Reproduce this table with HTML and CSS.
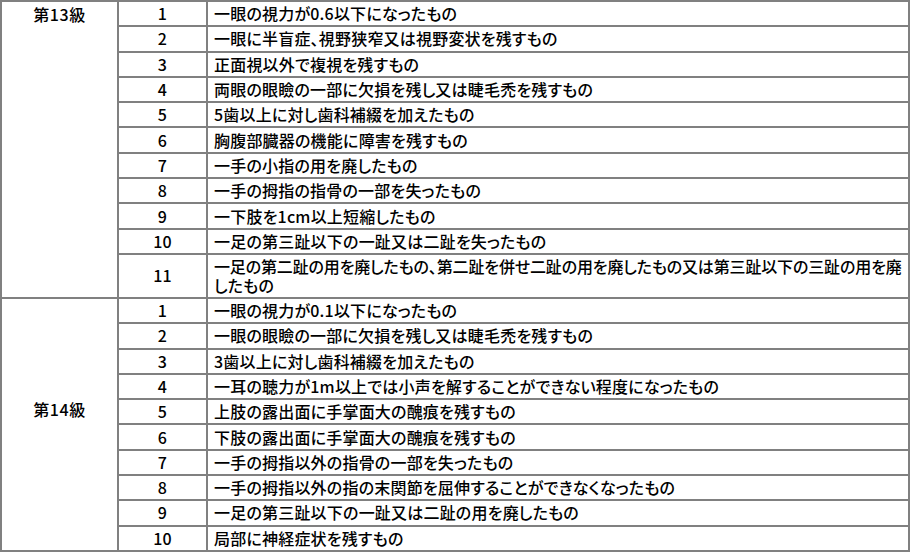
FILE: index.html
```html
<!DOCTYPE html>
<html lang="ja">
<head>
<meta charset="utf-8">
<link rel="stylesheet" href="styles.css">
</head>
<body>
<table class="grades">
<tbody>
<tr><td class="grade g13" rowspan="11">第13級</td><td class="num">1</td><td class="desc">一眼の視力が0.6以下になったもの</td></tr>
<tr><td class="num">2</td><td class="desc">一眼に半盲症、視野狭窄又は視野変状を残すもの</td></tr>
<tr><td class="num">3</td><td class="desc">正面視以外で複視を残すもの</td></tr>
<tr><td class="num">4</td><td class="desc">両眼の眼瞼の一部に欠損を残し又は睫毛禿を残すもの</td></tr>
<tr><td class="num">5</td><td class="desc">5歯以上に対し歯科補綴を加えたもの</td></tr>
<tr><td class="num">6</td><td class="desc">胸腹部臓器の機能に障害を残すもの</td></tr>
<tr><td class="num">7</td><td class="desc">一手の小指の用を廃したもの</td></tr>
<tr><td class="num">8</td><td class="desc">一手の拇指の指骨の一部を失ったもの</td></tr>
<tr><td class="num">9</td><td class="desc">一下肢を1cm以上短縮したもの</td></tr>
<tr><td class="num">10</td><td class="desc">一足の第三趾以下の一趾又は二趾を失ったもの</td></tr>
<tr class="tall"><td class="num">11</td><td class="desc"><span class="line">一足の第二趾の用を廃したもの、第二趾を併せ二趾の用を廃したもの又は第三趾以下の三趾の用を廃</span><br>したもの</td></tr>
<tr><td class="grade g14" rowspan="10">第14級</td><td class="num">1</td><td class="desc">一眼の視力が0.1以下になったもの</td></tr>
<tr><td class="num">2</td><td class="desc">一眼の眼瞼の一部に欠損を残し又は睫毛禿を残すもの</td></tr>
<tr><td class="num">3</td><td class="desc">3歯以上に対し歯科補綴を加えたもの</td></tr>
<tr><td class="num">4</td><td class="desc">一耳の聴力が1m以上では小声を解することができない程度になったもの</td></tr>
<tr><td class="num">5</td><td class="desc">上肢の露出面に手掌面大の醜痕を残すもの</td></tr>
<tr><td class="num">6</td><td class="desc">下肢の露出面に手掌面大の醜痕を残すもの</td></tr>
<tr><td class="num">7</td><td class="desc">一手の拇指以外の指骨の一部を失ったもの</td></tr>
<tr><td class="num">8</td><td class="desc">一手の拇指以外の指の末関節を屈伸することができなくなったもの</td></tr>
<tr><td class="num">9</td><td class="desc">一足の第三趾以下の一趾又は二趾の用を廃したもの</td></tr>
<tr><td class="num">10</td><td class="desc">局部に神経症状を残すもの</td></tr>
</tbody>
</table>
</body>
</html>
```
FILE: styles.css
```css
html, body {
  margin: 0;
  padding: 0;
  background: #fff;
}
body {
  font-family: "Noto Sans CJK JP", "Noto Sans", sans-serif;
  font-size: 16px;
  font-weight: 500;
  font-feature-settings: "palt";
  letter-spacing: 0.2px;
  color: #000;
}
.grades {
  border-collapse: separate;
  border-spacing: 0;
  table-layout: fixed;
  width: 910px;
  border-top: 2px solid #808080;
  border-left: 2px solid #808080;
}
.grades td {
  box-sizing: border-box;
  border-right: 2px solid #808080;
  border-bottom: 2px solid #808080;
  line-height: 19px;
  height: 25.3px;
  padding: 0;
  vertical-align: middle;
}
.grades tr.tall td {
  height: 44px;
}
.grade {
  width: 117px;
  text-align: center;
  vertical-align: top !important;
  letter-spacing: 0.6px;
}
.g13 {
  padding-top: 3px !important;
}
.g14 {
  padding-top: 101px !important;
}
.num {
  width: 89px;
  text-align: center;
}
.desc {
  width: 702px;
  padding: 0 0 0 6px !important;
  overflow: hidden;
}
.line {
  white-space: nowrap;
  letter-spacing: -0.15px;
}
```
